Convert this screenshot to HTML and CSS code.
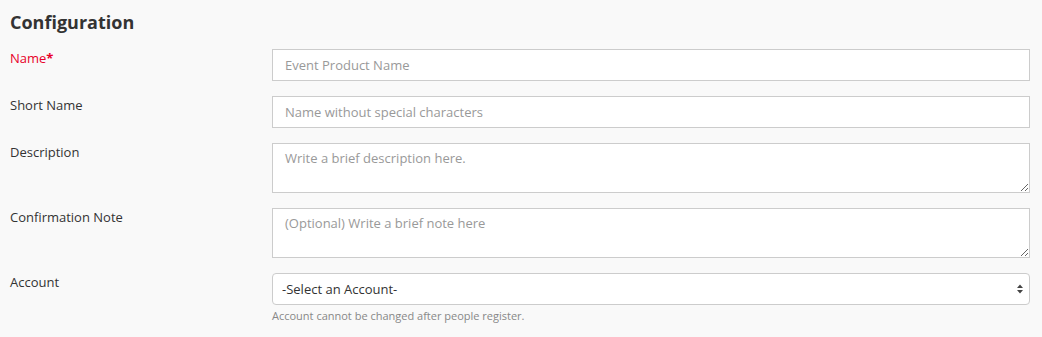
FILE: index.html
```html
<!DOCTYPE html>
<html lang="en">
<head>
  <meta charset="UTF-8" />
  <title>Configuration</title>
  <meta name="viewport" content="width=device-width, initial-scale=1" />
  <link rel="stylesheet" href="styles.css">
</head>
<body>
  <div class="container">
    <h2>Configuration</h2>

    <div class="form-row">
      <label for="name" class="required">Name<span>*</span></label>
      <div class="field">
        <input type="text" id="name" placeholder="Event Product Name" />
      </div>
    </div>

    <div class="form-row">
      <label for="shortName">Short Name</label>
      <div class="field">
        <input type="text" id="shortName" placeholder="Name without special characters" />
      </div>
    </div>

    <div class="form-row">
      <label for="description">Description</label>
      <div class="field">
        <textarea id="description" placeholder="Write a brief description here."></textarea>
      </div>
    </div>

    <div class="form-row">
      <label for="note">Confirmation Note</label>
      <div class="field">
        <textarea id="note" placeholder="(Optional) Write a brief note here"></textarea>
      </div>
    </div>

    <div class="form-row">
      <label for="account">Account</label>
      <div class="field">
        <div class="select-wrap">
          <select id="account">
            <option>-Select an Account-</option>
          </select>
          <svg class="select-arrows" width="8" height="12" viewBox="0 0 8 12">
            <path d="M4 1.5 L7 5 L1 5 Z M4 10.5 L7 7 L1 7 Z" fill="#444" />
          </svg>
        </div>
        <div class="help">Account cannot be changed after people register.</div>
      </div>
    </div>
  </div>
</body>
</html>
```

FILE: styles.css
```css
:root {
  --bg: #f9f9f9;
  --text: #333;
  --muted: #999;
  --border: #ccc;
  --required: #e8002a;
}

* { box-sizing: border-box; }

body {
  font-family: "Open Sans", sans-serif;
  margin: 0;
  background-color: var(--bg);
  color: var(--text);
}

.container {
  padding: 8px 12px 10px 10px;
}

h2 {
  margin: 0 0 13px 0;
  font-size: 18px;
  font-weight: 700;
  line-height: 28px;
}

.form-row {
  display: flex;
  align-items: flex-start;
  margin-bottom: 15px;
}

label {
  width: 262px;
  flex-shrink: 0;
  font-size: 13px;
  line-height: 18px;
}

label.required {
  color: var(--required);
}

label.required span {
  font-weight: 700;
}

.field {
  flex: 1;
}

input[type="text"], textarea, select {
  display: block;
  width: 100%;
  font-family: "Open Sans", sans-serif;
  font-size: 13px;
  color: var(--text);
  background-color: #fff;
  border: 1px solid var(--border);
  border-radius: 0;
  outline: none;
}

input[type="text"] {
  height: 32px;
  padding: 0 12px;
}

textarea {
  height: 50px;
  padding: 5px 12px;
  line-height: 18px;
  resize: vertical;
}

::placeholder {
  color: var(--muted);
}

.select-wrap {
  position: relative;
}

select {
  height: 32px;
  padding: 0 24px 0 9px;
  border-radius: 4px;
  appearance: none;
  -webkit-appearance: none;
}

.select-arrows {
  position: absolute;
  right: 6px;
  top: 10px;
  pointer-events: none;
}

.help {
  margin-top: 3px;
  font-size: 11px;
  color: #888;
}
```
